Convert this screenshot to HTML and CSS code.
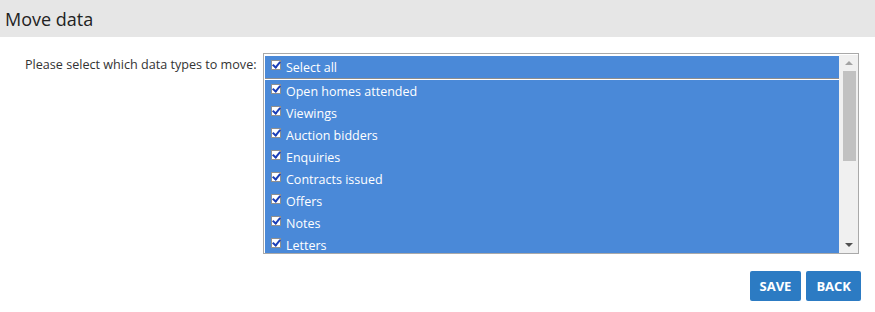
FILE: index.html
```html
<!DOCTYPE html>
<html lang="en">
<head>
    <meta charset="UTF-8">
    <title>Move data</title>
    <link rel="stylesheet" href="styles.css">
</head>
<body>
    <div class="page-header">
        <h1>Move data</h1>
    </div>

    <div class="form">
        <div class="form-row">
            <label class="form-label">Please select which data types to move:</label>
            <div class="listbox">
                <div class="list-items">
                    <div class="option select-all"><span class="check"></span>Select all</div>
                    <div class="separator"></div>
                    <div class="option"><span class="check"></span>Open homes attended</div>
                    <div class="option"><span class="check"></span>Viewings</div>
                    <div class="option"><span class="check"></span>Auction bidders</div>
                    <div class="option"><span class="check"></span>Enquiries</div>
                    <div class="option"><span class="check"></span>Contracts issued</div>
                    <div class="option"><span class="check"></span>Offers</div>
                    <div class="option"><span class="check"></span>Notes</div>
                    <div class="option"><span class="check"></span>Letters</div>
                </div>
                <div class="scrollbar">
                    <div class="scroll-arrow up"></div>
                    <div class="scroll-track">
                        <div class="scroll-thumb"></div>
                    </div>
                    <div class="scroll-arrow down"></div>
                </div>
            </div>
        </div>

        <div class="form-actions">
            <button class="btn">SAVE</button>
            <button class="btn">BACK</button>
        </div>
    </div>
</body>
</html>
```

FILE: styles.css
```css
body {
    margin: 0;
    font-family: 'Open Sans', sans-serif;
    color: #333;
    background: #fff;
}

.page-header {
    background: #e6e6e6;
    height: 37px;
    padding-left: 5px;
    display: flex;
    align-items: center;
}

.page-header h1 {
    margin: 0;
    font-size: 18px;
    font-weight: 400;
    color: #222;
}

.form {
    width: 861px;
    padding-top: 16px;
}

.form-row {
    display: flex;
    align-items: flex-start;
}

.form-label {
    width: 238px;
    padding-left: 25px;
    padding-top: 3px;
    font-size: 12.6px;
    color: #333;
}

.listbox {
    display: flex;
    width: 593px;
    height: 198px;
    border: 1px solid #a9a9a9;
    padding: 1px 0 0 1px;
    background: #fff;
}

.list-items {
    flex: 1;
    overflow: hidden;
    padding-top: 1px;
}

.option {
    display: flex;
    align-items: center;
    gap: 5px;
    height: 22px;
    padding-left: 6px;
    background: #4a89d8;
    color: #fff;
    font-size: 12.5px;
}

.separator {
    height: 1px;
    background: #8e8e8e;
    margin-bottom: 1px;
}

.check {
    position: relative;
    width: 8px;
    height: 8px;
    border: 1px solid #8f8f8f;
    background: #fff;
    margin-top: -4px;
}

.check::after {
    content: "";
    position: absolute;
    left: 2px;
    top: -1px;
    width: 3px;
    height: 6px;
    border: solid #1b3fb8;
    border-width: 0 2px 2px 0;
    transform: rotate(40deg);
}

.scrollbar {
    width: 19px;
    background: #f0f0f0;
    display: flex;
    flex-direction: column;
}

.scroll-arrow {
    height: 16px;
    display: flex;
    align-items: center;
    justify-content: center;
}

.scroll-arrow::before {
    content: "";
    border-left: 4px solid transparent;
    border-right: 4px solid transparent;
}

.scroll-arrow.up::before {
    border-bottom: 4px solid #a3a3a3;
}

.scroll-arrow.down::before {
    border-top: 4px solid #505050;
}

.scroll-track {
    flex: 1;
    padding: 0 2px 0 4px;
}

.scroll-thumb {
    height: 90px;
    background: #c1c1c1;
}

.form-actions {
    display: flex;
    justify-content: flex-end;
    gap: 5px;
    margin-top: 17px;
}

.btn {
    height: 30px;
    padding: 0 10px;
    border: none;
    border-radius: 2px;
    background: #2c7bc3;
    color: #fff;
    font-family: 'Open Sans', sans-serif;
    font-size: 13px;
    font-weight: 700;
    cursor: pointer;
}
```
